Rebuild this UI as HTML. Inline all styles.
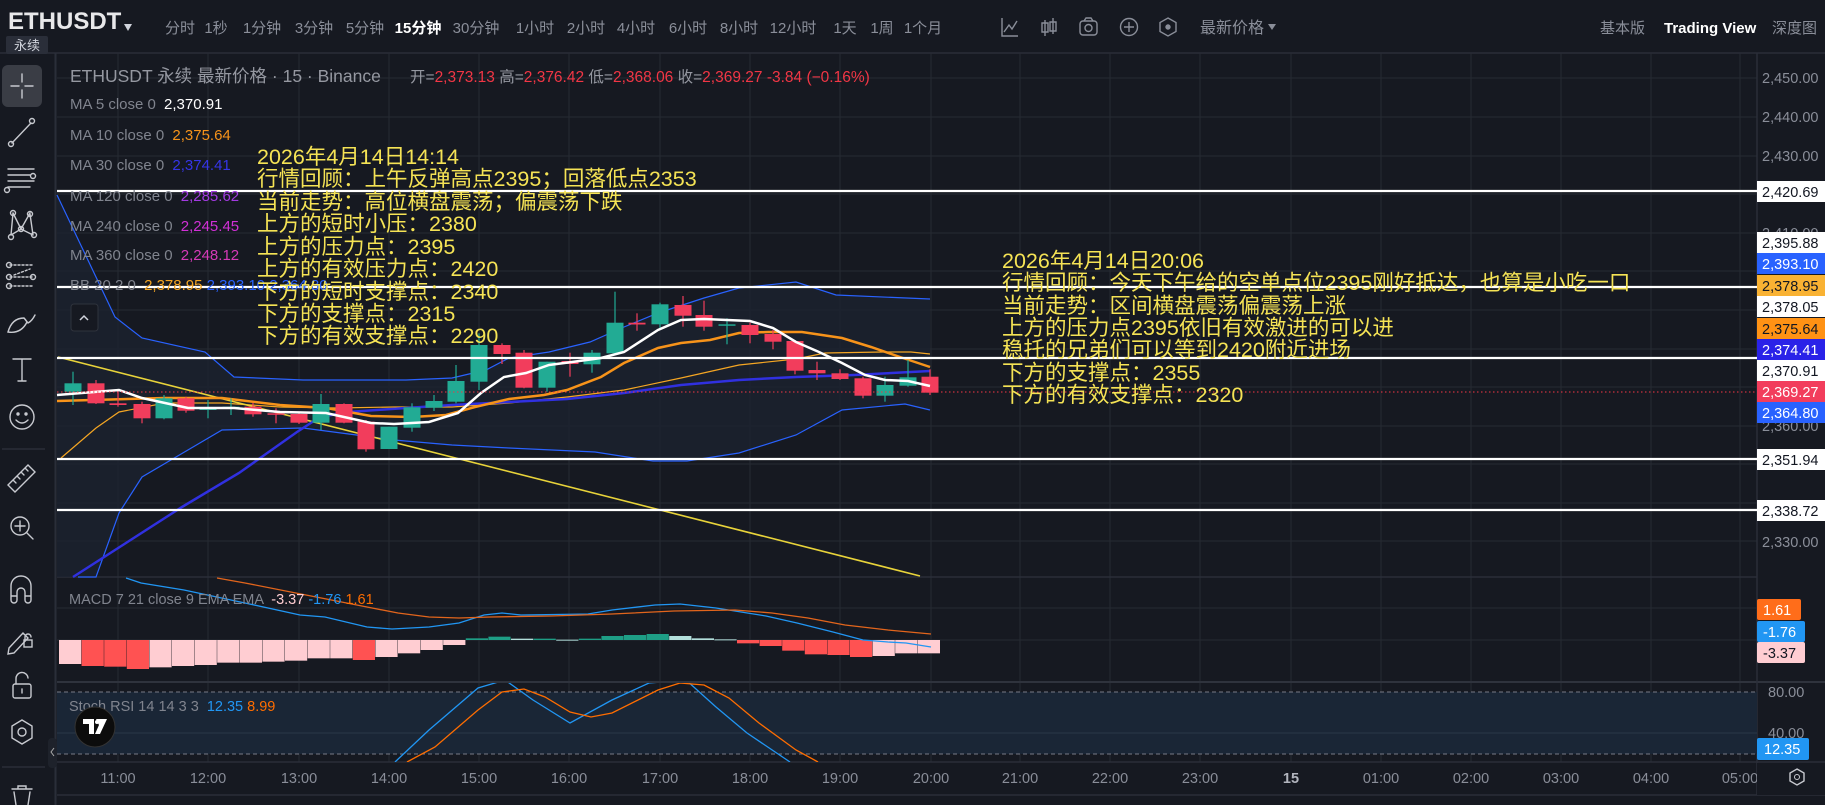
<!DOCTYPE html>
<html><head><meta charset="utf-8">
<style>
html,body{margin:0;padding:0;background:#161921;width:1825px;height:805px;overflow:hidden}
svg{display:block}
text{font-family:"Liberation Sans","Noto Sans CJK SC",sans-serif}
.cn{font-family:"Liberation Sans","Noto Sans CJK SC",sans-serif}
</style></head><body>
<svg width="1825" height="805" viewBox="0 0 1825 805" xmlns="http://www.w3.org/2000/svg">
<rect width="1825" height="805" fill="#161921"/>
<!-- header -->
<line x1="0" y1="53" x2="1825" y2="53" stroke="#2a2e39" stroke-width="1.5"/>
<text x="8" y="29" font-size="24" fill="#e8e8ea" font-weight="bold">ETHUSDT</text>
<path d="M124 24 L132 24 L128 31 Z" fill="#d1d4dc"/>
<rect x="6" y="36" width="42" height="18" rx="2" fill="#2a2e39"/>
<text x="27" y="50" font-size="13" fill="#d1d4dc" text-anchor="middle">永续</text>
<g font-size="15" fill="#8a8e99" text-anchor="middle">
<text x="180" y="33">分时</text><text x="216" y="33">1秒</text><text x="262" y="33">1分钟</text>
<text x="314" y="33">3分钟</text><text x="365" y="33">5分钟</text>
<text x="418" y="33" fill="#ffffff" font-weight="bold">15分钟</text>
<text x="476" y="33">30分钟</text><text x="535" y="33">1小时</text><text x="586" y="33">2小时</text>
<text x="636" y="33">4小时</text><text x="688" y="33">6小时</text><text x="739" y="33">8小时</text>
<text x="793" y="33">12小时</text><text x="845" y="33">1天</text><text x="882" y="33">1周</text><text x="923" y="33">1个月</text>
</g>
<g stroke="#8a8e99" stroke-width="1.4" fill="none">
<path d="M1002 18 V36 H1018 M1004 32 L1009 25 L1012 29 L1017 21"/>
<path d="M1045 20 V36 M1053 18 V34 M1042 23 h6 v9 h-6 z M1050 22 h6 v9 h-6 z"/>
<rect x="1080" y="21" width="17" height="14" rx="3"/><circle cx="1088.5" cy="28" r="3.5"/><path d="M1084 21 l2 -3 h5 l2 3"/>
<circle cx="1129" cy="27" r="8.5"/><path d="M1129 22 v10 M1124 27 h10"/>
<path d="M1168 18 l8 4.5 v9 l-8 4.5 l-8 -4.5 v-9 z"/><circle cx="1168" cy="27" r="2" fill="#8a8e99"/>
</g>
<text x="1200" y="33" font-size="16" fill="#8a8e99">最新价格</text>
<path d="M1268 24 L1276 24 L1272 30 Z" fill="#8a8e99"/>
<text x="1600" y="33" font-size="15" fill="#8a8e99">基本版</text>
<text x="1664" y="33" font-size="15" fill="#ffffff" font-weight="bold">Trading View</text>
<text x="1772" y="33" font-size="15" fill="#8a8e99">深度图</text>

<!-- left toolbar -->
<line x1="55.5" y1="53" x2="55.5" y2="805" stroke="#2a2e39" stroke-width="2"/>
<rect x="2" y="65" width="40" height="42" rx="6" fill="#3a3d45"/>
<g stroke="#c8cad0" stroke-width="1.4" fill="none" stroke-linecap="round">
<path d="M22 74 v8 M22 90 v8 M11 86 h8 M25 86 h8"/>
<path d="M12 143 L31 123"/><circle cx="11" cy="144" r="2.5"/><circle cx="32" cy="121" r="2.5"/>
<path d="M8 169 h26 M8 175 h22 M8 181 h26 M8 187 h22"/><circle cx="33" cy="176" r="2.5"/><circle cx="7" cy="190" r="2.5"/>
<path d="M13 213 l8 16 l9 -16 M11 235 l10 -6 l12 6 M13 213 l-2 22 M30 214 l3 21"/><circle cx="13" cy="213" r="2.5"/><circle cx="30" cy="214" r="2.5"/><circle cx="21" cy="229" r="2.5"/><circle cx="11" cy="237" r="2.5"/><circle cx="34" cy="235" r="2.5"/>
<path d="M10 265 h22 M10 277 h22 M10 286 h22 M14 275 l16 -6" stroke-dasharray="2 2"/><circle cx="9" cy="265" r="2.5"/><circle cx="9" cy="277" r="2.5"/><circle cx="33" cy="277" r="2.5"/><circle cx="9" cy="286" r="2.5"/>
<path d="M8 332 q4 -14 16 -14 l3 4 q-6 12 -19 10 z M25 319 l3 4 q4 -2 7 -8"/>
<path d="M13 359 h18 M22 359 v22 M18 381 h8"/>
<circle cx="22" cy="417" r="12"/><circle cx="18" cy="414" r="1" fill="#c8cad0"/><circle cx="26" cy="414" r="1" fill="#c8cad0"/><path d="M16 420 q6 6 12 0"/>
<path d="M8 485 l20 -20 l7 7 l-20 20 z M13 480 l3 3 M17 476 l3 3 M21 472 l3 3 M25 468 l3 3"/>
<circle cx="20" cy="526" r="9"/><path d="M27 533 l6 6 M20 521 v10 M15 526 h10"/>
<path d="M11 586 v14 a3 3 0 0 0 6 0 v-8 a4 4 0 0 1 8 0 v8 a3 3 0 0 0 6 0 v-14 a10 10 0 0 0 -20 0 z M11 596 h6 M25 596 h6"/>
<path d="M9 648 l14 -15 l5 5 l-14 15 l-6 1 z"/><rect x="24" y="640" width="8" height="7"/><path d="M25 640 v-3 a3 3 0 0 1 6 0"/>
<rect x="13" y="684" width="18" height="14" rx="2"/><path d="M16 684 v-5 a6 6 0 0 1 12 -1"/><path d="M22 689 v4"/>
<path d="M22 720 l10 6 v12 l-10 6 l-10 -6 v-12 z"/><circle cx="22" cy="732" r="4"/>
<path d="M12 789 h20 M18 789 v-3 h8 v3 M14 792 l2 13 M30 792 l-2 13"/>
</g>
<line x1="2" y1="449" x2="45" y2="449" stroke="#2a2e39" stroke-width="1.5"/>
<line x1="2" y1="767" x2="45" y2="767" stroke="#2a2e39" stroke-width="1.5"/>
<rect x="48" y="738" width="9" height="30" rx="4" fill="#1e222b"/>
<path d="M54 748 l-3 4 l3 4" stroke="#aaa" fill="none"/>

<!-- grid -->
<g stroke="#262a33" stroke-width="1">
<path d="M57 78H1757M57 117H1757M57 156H1757M57 194H1757M57 233H1757M57 271H1757M57 310H1757M57 349H1757M57 387H1757M57 426H1757M57 464H1757M57 503H1757M57 541H1757"/>
<path d="M118 53V762M208 53V762M299 53V762M389 53V762M479 53V762M569 53V762M660 53V762M750 53V762M840 53V762M931 53V762M1020 53V762M1110 53V762M1200 53V762M1291 53V762M1381 53V762M1471 53V762M1561 53V762M1651 53V762M1740 53V762"/>
<path d="M57 608H1757M57 640H1757M57 733H1757"/>
</g>
<line x1="57" y1="577" x2="1757" y2="577" stroke="#2a2e39" stroke-width="1.5"/>
<line x1="57" y1="682" x2="1825" y2="682" stroke="#2f333d" stroke-width="2"/>
<line x1="57" y1="762" x2="1825" y2="762" stroke="#2a2e39" stroke-width="1.5"/>
<line x1="57" y1="795" x2="1825" y2="795" stroke="#2a2e39" stroke-width="1.5"/>
<line x1="1757" y1="53" x2="1757" y2="795" stroke="#2a2e39" stroke-width="1.5"/>

<!-- BB fill -->
<path d="M57 195 L115 317 L142 338 L205 352 L234 377 L303 380 L406 380 L452 378 L486 370 L509 358 L549 352 L590 342 L624 327 L658 313 L704 298 L739 288 L796 282 L836 295 L930 299 L930 410 L905 404 L842 410 L796 435 L739 453 L687 461 L653 461 L595 452 L509 448 L452 445 L394 440 L303 428 L222 430 L176 457 L142 477 L119 513 L96 577 L57 577 Z" fill="#1b2230" opacity="0.8"/>
<polyline fill="none" stroke="#2962ff" stroke-width="1.2" points="57,195 115,317 142,338 205,352 234,377 303,380 406,380 452,378 486,370 509,358 549,352 590,342 624,327 658,313 704,298 739,288 796,282 836,295 930,299"/>
<polyline fill="none" stroke="#2962ff" stroke-width="1.2" points="78,577 96,577 119,513 142,477 176,457 222,430 303,428 394,440 452,445 509,448 595,452 653,461 687,461 739,453 796,435 842,410 905,404 930,410"/>
<polyline fill="none" stroke="#f5a623" stroke-width="1.2" points="61,458 96,428 119,412 165,403 222,403 280,407 337,408 394,407 452,407 509,403 567,397 624,390 681,378 739,365 796,359 825,353 882,352 911,352 930,354"/>
<line x1="58" y1="357" x2="920" y2="576" stroke="#e8d33a" stroke-width="1.6"/>
<polyline fill="none" stroke="#3030e0" stroke-width="2.5" points="73,577 182,507 239,473 297,432 320,417 348,412 406,408 452,405 509,402 567,399 624,393 681,385 739,380 796,377 854,375 930,371"/>
<polyline fill="none" stroke="#f7931a" stroke-width="2.5" points="57,401 165,398 222,398 280,405 326,408 371,416 412,417 446,415 475,407 509,399 544,395 567,390 601,377 624,363 658,348 681,343 710,340 739,333 768,332 802,332 842,338 871,347 900,357 930,367"/>
<g id="candles"></g>
<polyline fill="none" stroke="#ffffff" stroke-width="2.5" points="57,395 119,390 142,398 188,408 234,408 280,412 326,413 371,423 394,424 429,422 458,413 481,393 504,377 526,373 549,365 572,362 601,358 624,352 658,330 681,320 704,319 750,321 773,328 796,342 819,352 842,363 865,375 885,380 908,381 930,386"/>

<g stroke="#ffffff" stroke-width="2.2">
<line x1="57" y1="191" x2="1757" y2="191"/>
<line x1="57" y1="287" x2="1757" y2="287"/>
<line x1="57" y1="358" x2="1757" y2="358"/>
<line x1="57" y1="459" x2="1757" y2="459"/>
<line x1="57" y1="510" x2="1757" y2="510"/>
</g>
<line x1="57" y1="392" x2="1757" y2="392" stroke="#f23645" stroke-width="1" stroke-dasharray="1.5 2.5"/>

<!-- legend -->
<text x="70" y="82" font-size="17.5" fill="#9598a1">ETHUSDT 永续 最新价格 · 15 · Binance</text>
<text x="410" y="82" font-size="15.5" fill="#9598a1">开=<tspan fill="#f23645">2,373.13</tspan> 高=<tspan fill="#f23645">2,376.42</tspan> 低=<tspan fill="#f23645">2,368.06</tspan> 收=<tspan fill="#f23645">2,369.27</tspan> <tspan fill="#f23645">-3.84 (−0.16%)</tspan></text>
<g font-size="15" fill="#80848e">
<text x="70" y="109">MA 5 close 0 <tspan fill="#ffffff" dx="4">2,370.91</tspan></text>
<text x="70" y="140">MA 10 close 0 <tspan fill="#f7931a" dx="4">2,375.64</tspan></text>
<text x="70" y="170">MA 30 close 0 <tspan fill="#3535e6" dx="4">2,374.41</tspan></text>
<text x="70" y="201">MA 120 close 0 <tspan fill="#a23ae0" dx="4">2,285.62</tspan></text>
<text x="70" y="231">MA 240 close 0 <tspan fill="#d130d6" dx="4">2,245.45</tspan></text>
<text x="70" y="260">MA 360 close 0 <tspan fill="#d63ab8" dx="4">2,248.12</tspan></text>
<text x="70" y="290">BB 20 2 0 <tspan fill="#f5a623" dx="4">2,378.95</tspan> <tspan fill="#2962ff">2,393.10</tspan> <tspan fill="#2962ff">2,364.80</tspan></text>
</g>
<rect x="71" y="304" width="27" height="27" rx="3" fill="#161921" stroke="#2f333d"/>
<path d="M80 320 l4 -4 l4 4" stroke="#d1d4dc" fill="none" stroke-width="1.5"/>

<!-- annotation texts -->
<g font-size="21.5" fill="#f5e355" class="cn">
<text x="257" y="164">2026年4月14日14:14</text>
<text x="257" y="186">行情回顾：上午反弹高点2395；回落低点2353</text>
<text x="257" y="209">当前走势：高位横盘震荡；偏震荡下跌</text>
<text x="257" y="231">上方的短时小压：2380</text>
<text x="257" y="254">上方的压力点：2395</text>
<text x="257" y="276">上方的有效压力点：2420</text>
<text x="257" y="299">下方的短时支撑点：2340</text>
<text x="257" y="321">下方的支撑点：2315</text>
<text x="257" y="343">下方的有效支撑点：2290</text>
<text x="1002" y="268">2026年4月14日20:06</text>
<text x="1002" y="290">行情回顾：今天下午给的空单点位2395刚好抵达，也算是小吃一口</text>
<text x="1002" y="313">当前走势：区间横盘震荡偏震荡上涨</text>
<text x="1002" y="335">上方的压力点2395依旧有效激进的可以进</text>
<text x="1002" y="357">稳托的兄弟们可以等到2420附近进场</text>
<text x="1002" y="380">下方的支撑点：2355</text>
<text x="1002" y="402">下方的有效支撑点：2320</text>
</g>

<!-- MACD -->
<g id="hist"></g>
<polyline fill="none" stroke="#2196f3" stroke-width="1.3" points="126,578 141,583 184,590 245,603 300,615 325,617 367,627 392,629 429,627 459,623 484,615 502,613 521,615 588,614 612,610 655,605 680,604 716,608 766,616 797,623 833,632 863,640 888,642 906,643 931,647"/>
<polyline fill="none" stroke="#e2651c" stroke-width="1.3" points="217,578 245,583 306,595 367,607 398,613 429,617 459,618 490,617 551,616 612,614 674,611 735,610 772,613 808,618 845,625 888,630 931,634"/>
<text x="69" y="604" font-size="14.5" fill="#80848e">MACD 7 21 close 9 EMA EMA <tspan fill="#ffcdd2" dx="4">-3.37</tspan> <tspan fill="#2196f3">-1.76</tspan> <tspan fill="#ff6d00">1.61</tspan></text>

<!-- Stoch -->
<rect x="57" y="692" width="1700" height="62" fill="#1a2636"/>
<line x1="57" y1="692" x2="1757" y2="692" stroke="#787b86" stroke-dasharray="4 3"/>
<line x1="57" y1="754" x2="1757" y2="754" stroke="#787b86" stroke-dasharray="4 3"/>
<line x1="57" y1="733" x2="1757" y2="733" stroke="#2a3848"/>
<svg x="57" y="683" width="1700" height="79" viewBox="57 683 1700 79" overflow="hidden">
<polyline fill="none" stroke="#2196f3" stroke-width="1.3" points="395,762 429,730 478,688 505,680 533,700 570,723 612,700 649,683 686,680 716,707 747,733 790,762"/>
<polyline fill="none" stroke="#ff6d00" stroke-width="1.3" points="407,762 435,747 478,710 502,692 524,689 545,697 570,712 591,717 612,713 658,690 680,683 704,685 729,698 759,723 796,750 818,762"/>
</svg>
<text x="69" y="711" font-size="14.5" fill="#80848e">Stoch RSI 14 14 3 3 <tspan fill="#2196f3" dx="4">12.35</tspan> <tspan fill="#ff6d00">8.99</tspan></text>
<circle cx="95" cy="727" r="20" fill="#0c0c0c" stroke="#333"/>
<path d="M83 719 h11 v15 h-5 v-10 h-6 z M96 719 h11 l-7 15 h-5 l4 -9 z" fill="#ffffff"/>
<circle cx="97" cy="722" r="2" fill="#ffffff"/>

<!-- time axis -->
<g font-size="14.5" fill="#8a8e99" text-anchor="middle">
<text x="118" y="783">11:00</text><text x="208" y="783">12:00</text><text x="299" y="783">13:00</text><text x="389" y="783">14:00</text><text x="479" y="783">15:00</text><text x="569" y="783">16:00</text><text x="660" y="783">17:00</text><text x="750" y="783">18:00</text><text x="840" y="783">19:00</text><text x="931" y="783">20:00</text><text x="1020" y="783">21:00</text><text x="1110" y="783">22:00</text><text x="1200" y="783">23:00</text><text x="1291" y="783" font-weight="bold" fill="#b2b5be">15</text><text x="1381" y="783">01:00</text><text x="1471" y="783">02:00</text><text x="1561" y="783">03:00</text><text x="1651" y="783">04:00</text><text x="1740" y="783">05:00</text>
</g>
<rect x="1757" y="763" width="68" height="32" fill="#161921"/>
<path d="M1797 769 l7 4 v8 l-7 4 l-7 -4 v-8 z" stroke="#c8cad0" fill="none" stroke-width="1.4"/><circle cx="1797" cy="777" r="2.5" stroke="#c8cad0" fill="none"/>

<!-- price axis -->
<g font-size="14.5" fill="#8a8e99">
<text x="1762" y="83">2,450.00</text><text x="1762" y="122">2,440.00</text><text x="1762" y="161">2,430.00</text><text x="1762" y="238">2,410.00</text><text x="1762" y="431">2,360.00</text><text x="1762" y="547">2,330.00</text>
<text x="1768" y="697">80.00</text><text x="1768" y="738">40.00</text>
</g>
<g font-size="14.5">
<rect x="1757" y="181" width="68" height="21" fill="#ffffff"/><text x="1762" y="197" fill="#131722">2,420.69</text>
<rect x="1757" y="232" width="68" height="21" fill="#ffffff"/><text x="1762" y="248" fill="#131722">2,395.88</text>
<rect x="1757" y="253" width="68" height="21" fill="#2962ff"/><text x="1762" y="269" fill="#ffffff">2,393.10</text>
<rect x="1757" y="275" width="68" height="21" fill="#f9b233"/><text x="1762" y="291" fill="#131722">2,378.95</text>
<rect x="1757" y="296" width="68" height="21" fill="#ffffff"/><text x="1762" y="312" fill="#131722">2,378.05</text>
<rect x="1757" y="318" width="68" height="21" fill="#ff9214"/><text x="1762" y="334" fill="#131722">2,375.64</text>
<rect x="1757" y="339" width="68" height="21" fill="#2a22e8"/><text x="1762" y="355" fill="#ffffff">2,374.41</text>
<rect x="1757" y="360" width="68" height="21" fill="#ffffff"/><text x="1762" y="376" fill="#131722">2,370.91</text>
<rect x="1757" y="381" width="68" height="21" fill="#f23d5c"/><text x="1762" y="397" fill="#ffffff">2,369.27</text>
<rect x="1757" y="402" width="68" height="21" fill="#2962ff"/><text x="1762" y="418" fill="#ffffff">2,364.80</text>
<rect x="1757" y="449" width="68" height="21" fill="#ffffff"/><text x="1762" y="465" fill="#131722">2,351.94</text>
<rect x="1757" y="500" width="68" height="21" fill="#ffffff"/><text x="1762" y="516" fill="#131722">2,338.72</text>
<rect x="1757" y="599" width="44" height="21" rx="2" fill="#ff6d1a"/><text x="1763" y="615" fill="#ffffff">1.61</text>
<rect x="1757" y="621" width="48" height="21" rx="2" fill="#2196f3"/><text x="1763" y="637" fill="#ffffff">-1.76</text>
<rect x="1757" y="642" width="48" height="21" rx="2" fill="#ffcdd2"/><text x="1763" y="658" fill="#131722">-3.37</text>
<rect x="1757" y="738" width="52" height="22" rx="2" fill="#2196f3"/><text x="1764" y="754" fill="#ffffff">12.35</text>
</g>
</svg>
<script>
const NS="http://www.w3.org/2000/svg";
const C=[[73,383.3,391.7,371.7,405,1],[96,383.3,403.3,380,404,0],[118,403.3,405,390,406.7,0],[142,404,418.3,401.7,423.3,0],[164,398.3,418.3,395,419.3,1],[186,398.3,410.7,396.7,412.7,0],[208,407.7,410,400,418.3,1],[231,406.7,408.3,398.3,415,1],[253,406.7,414.3,402.7,416.7,0],[276,413.3,414.5,408.3,423.3,0],[299,414,422.7,411.7,424,0],[321,404,422.7,394,430,1],[344,404,422.7,403.3,423.3,0],[366,421.7,449.3,420,451.7,0],[389,426.7,449,426.7,449,1],[412,407.3,427.7,403.3,431.7,1],[434,401,407.7,395,411,1],[456,381,401.7,365,403.3,1],[479,345,381.7,333.3,390,1],[502,345,354,343.3,364,0],[524,352.7,387.7,350,388.3,0],[547,361.7,387.7,361.7,391.7,1],[570,361,364,352.7,376.7,0],[592,352.7,364.3,350,372.7,1],[615,322.7,353.3,291.7,355,1],[637,322.7,324.5,313.3,330.7,0],[660,304.3,324.3,302.7,330,1],[683,305,315.7,296,326.7,0],[704,315,326.7,300.7,330.7,0],[727,324.3,325.8,318.3,344.3,1],[750,325,335,322.7,343.3,0],[773,334,341.7,330,349.3,0],[795,341,370.7,340,374.3,0],[817,370,373.3,361.7,380,0],[840,373.3,379,369.3,380,0],[863,378.3,395.7,376.7,398.3,0],[885,385,395.7,376.7,401.7,1],[908,377.3,385.7,360,386.7,1],[930,376.7,392.7,369.3,395,0]];
const g=document.getElementById("candles");
C.forEach(c=>{const col=c[5]?"#22ab94":"#f23d5c";
const l=document.createElementNS(NS,"line");l.setAttribute("x1",c[0]);l.setAttribute("x2",c[0]);l.setAttribute("y1",c[3]);l.setAttribute("y2",c[4]);l.setAttribute("stroke",col);l.setAttribute("stroke-width","1.2");g.appendChild(l);
const r=document.createElementNS(NS,"rect");r.setAttribute("x",c[0]-8.5);r.setAttribute("width",17);r.setAttribute("y",c[1]);r.setAttribute("height",Math.max(1.5,c[2]-c[1]));r.setAttribute("fill",col);g.appendChild(r);});
const H=[[312,'P'],[318,'R'],[320,'R'],[327,'R'],[322,'P'],[318,'P'],[315,'P'],[308,'P'],[308,'P'],[305,'P'],[302,'P'],[295,'P'],[295,'P'],[300,'R'],[291,'P'],[280,'P'],[270,'P'],[255,'P'],[235,'T'],[230,'T'],[236,'L'],[236,'T'],[239,'L'],[236,'T'],[228,'T'],[225,'T'],[222,'T'],[228,'L'],[235,'L'],[238,'L'],[250,'R'],[258,'R'],[272,'R'],[283,'R'],[285,'R'],[291,'R'],[288,'P'],[280,'P'],[280,'P']];
const cols={P:"#ffcdd2",R:"#ff5252",T:"#1e9e86",L:"#b2dfdb"};
const hg=document.getElementById("hist");
H.forEach((h,i)=>{const y=560+h[0]/3;const x=59+i*22.6;const r=document.createElementNS(NS,"rect");
r.setAttribute("x",x);r.setAttribute("width",22.2);r.setAttribute("y",Math.min(640,y));r.setAttribute("height",Math.max(1,Math.abs(y-640)));r.setAttribute("fill",cols[h[1]]);hg.appendChild(r);});
</script>
</body></html>
